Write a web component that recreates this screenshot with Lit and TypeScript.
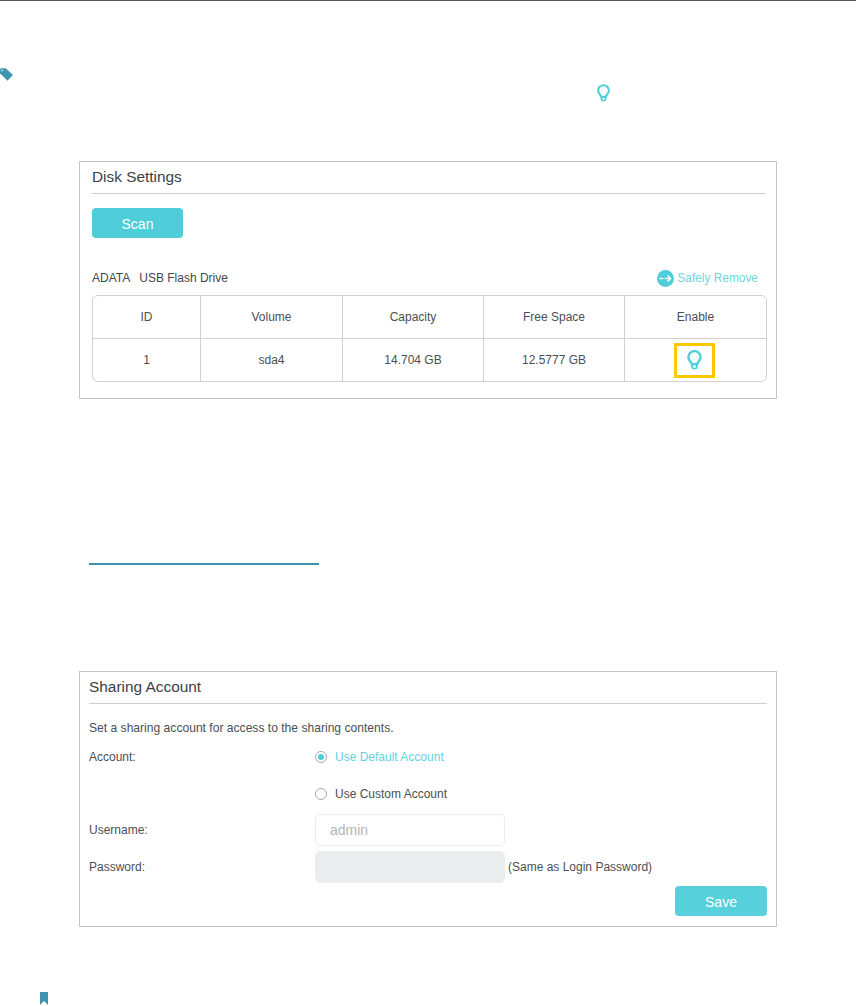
import { LitElement, html, css } from "lit";
import { customElement } from "lit/decorators.js";

const bulb = (w: number, h: number) => html`<svg width=${w} height=${h} viewBox="0 0 14 19" fill="none" stroke="#4fcfda" stroke-width="2.3">
  <path d="M4.6 13.6C4 11.2 1.2 9.9 1.2 6.9a5.8 5.8 0 0 1 11.6 0c0 3-2.8 4.3-3.4 6.7z"/>
  <path d="M4.7 13.6v1.8a2.3 2.3 0 0 0 4.6 0v-1.8" stroke-width="1.7"/>
</svg>`;

@customElement("app-root")
export class AppRoot extends LitElement {
  static styles = css`
    :host {
      display: block;
      width: 856px;
      height: 1006px;
      overflow: hidden;
      background: #fff;
      font-family: "Liberation Sans", Arial, sans-serif;
      font-size: 12px;
      color: #4a4f54;
    }
    .topline { height: 1px; background: #555; }
    .tag { display: block; margin-top: 67px; }
    .hint { display: flex; justify-content: flex-start; padding-left: 597px; margin-top: 3px; height: 18px; }
    .card {
      box-sizing: border-box;
      width: 698px;
      margin-left: 79px;
      border: 1px solid #c4c4c4;
      display: flex;
      flex-direction: column;
    }
    .disk { height: 238px; margin-top: 59px; padding: 0 10px 0 12px; }
    .share { height: 256px; margin-top: 106px; padding: 0 9px; }
    .title {
      height: 31px;
      line-height: 29px;
      font-size: 15.4px;
      color: #3d4145;
      border-bottom: 1px solid #cfcfcf;
      flex: none;
    }
    .btn {
      display: flex;
      align-items: center;
      justify-content: center;
      box-sizing: border-box;
      padding-top: 1px;
      background: #4fcdd8;
      color: #fff;
      border-radius: 4px;
      font-size: 14px;
      flex: none;
    }
    .scan { width: 91px; height: 30px; margin-top: 14px; }
    .drive-row {
      display: flex;
      justify-content: space-between;
      align-items: center;
      height: 24px;
      margin-top: 28px;
      padding-right: 8px;
    }
    .drive-name { display: flex; gap: 9px; color: #44484c; }
    .remove { display: flex; align-items: center; gap: 3px; color: #6fd6e0; font-size: 11.9px; }
    .table {
      margin-top: 5px;
      border: 1px solid #d0d0d0;
      border-radius: 6px;
      display: grid;
      grid-template-columns: 108px 142px 141px 141px 1fr;
      grid-template-rows: 43px 42px;
      width: 675px;
      box-sizing: border-box;
      margin-right: -1px;
    }
    .cell {
      display: flex;
      align-items: center;
      justify-content: center;
      border-right: 1px solid #d0d0d0;
      border-bottom: 1px solid #d0d0d0;
      color: #4a4f54;
    }
    .cell.last { border-right: none; }
    .cell.bottom { border-bottom: none; }
    .focus {
      box-sizing: border-box;
      width: 41px;
      height: 35px;
      margin-right: 2px;
      border: 3px solid #fdc800;
      display: flex;
      align-items: center;
      justify-content: center;
    }
    .link {
      width: 230px;
      height: 2px;
      margin: 164px 0 0 89px;
      background: #3a96ae;
    }
    .desc { margin-top: 17px; line-height: 14px; font-size: 12.1px; }
    .row { display: grid; grid-template-columns: 226px 1fr; align-items: center; }
    .r1 { height: 20px; margin-top: 12px; }
    .r2 { height: 20px; margin-top: 17px; }
    .r3 { height: 32px; margin-top: 10px; }
    .r4 { height: 32px; margin-top: 5px; }
    .radio { display: flex; align-items: center; gap: 8px; }
    .dot {
      box-sizing: border-box;
      width: 12px;
      height: 12px;
      border-radius: 50%;
      border: 1px solid #a9a9a9;
      display: flex;
      align-items: center;
      justify-content: center;
    }
    .dot.on::after {
      content: "";
      width: 6px;
      height: 6px;
      border-radius: 50%;
      background: #4fcdd8;
    }
    .on-label { color: #62d3de; }
    .field {
      box-sizing: border-box;
      width: 190px;
      height: 32px;
      border: 1px solid #eceeee;
      border-radius: 5px;
      padding-left: 14px;
      display: flex;
      align-items: center;
      font-size: 14px;
      color: #b5b5b5;
    }
    .field.off { background: #eaeded; }
    .pw { display: flex; align-items: center; gap: 3px; }
    .actions { display: flex; justify-content: flex-end; margin-top: 3px; }
    .save { width: 92px; height: 30px; background: #56d0db; }
    .mark { display: block; margin: 65px 0 0 40px; }
  `;

  render() {
    const heads = ["ID", "Volume", "Capacity", "Free Space", "Enable"];
    const vals = ["1", "sda4", "14.704 GB", "12.5777 GB"];
    return html`
      <div class="topline"></div>
      <svg class="tag" width="14" height="13" viewBox="0 0 14 13">
        <path d="M0 1 1 .2h4.6L13 7 7.4 12.8 0 5.2z" fill="#4095ae"/>
        <circle cx="2" cy="2.4" r=".9" fill="#cfe6ec"/>
      </svg>
      <div class="hint">${bulb(13, 18)}</div>

      <section class="card disk">
        <div class="title">Disk Settings</div>
        <div class="btn scan">Scan</div>
        <div class="drive-row">
          <div class="drive-name"><span>ADATA</span><span>USB Flash Drive</span></div>
          <div class="remove">
            <svg width="17" height="17" viewBox="0 0 17 17">
              <circle cx="8.5" cy="8.5" r="8.5" fill="#4fcdd8"/>
              <path d="M2.6 8.5h3.6M7.6 8.5h5.6M10.6 5.4l3 3.1-3 3.1" fill="none" stroke="#fff" stroke-width="1.5"/>
            </svg>
            <span>Safely Remove</span>
          </div>
        </div>
        <div class="table">
          ${heads.map((h, i) => html`<div class="cell ${i === 4 ? "last" : ""}">${h}</div>`)}
          ${vals.map((v) => html`<div class="cell bottom">${v}</div>`)}
          <div class="cell bottom last"><div class="focus">${bulb(15, 20)}</div></div>
        </div>
      </section>

      <div class="link"></div>

      <section class="card share">
        <div class="title">Sharing Account</div>
        <div class="desc">Set a sharing account for access to the sharing contents.</div>
        <div class="row r1">
          <span>Account:</span>
          <div class="radio"><span class="dot on"></span><span class="on-label">Use Default Account</span></div>
        </div>
        <div class="row r2">
          <span></span>
          <div class="radio"><span class="dot"></span><span>Use Custom Account</span></div>
        </div>
        <div class="row r3">
          <span>Username:</span>
          <div class="field">admin</div>
        </div>
        <div class="row r4">
          <span>Password:</span>
          <div class="pw"><div class="field off"></div><span>(Same as Login Password)</span></div>
        </div>
        <div class="actions"><div class="btn save">Save</div></div>
      </section>

      <svg class="mark" width="8" height="13" viewBox="0 0 8 13">
        <path d="M0 0h8v13L4 9 0 13z" fill="#4095ae"/>
      </svg>
    `;
  }
}
